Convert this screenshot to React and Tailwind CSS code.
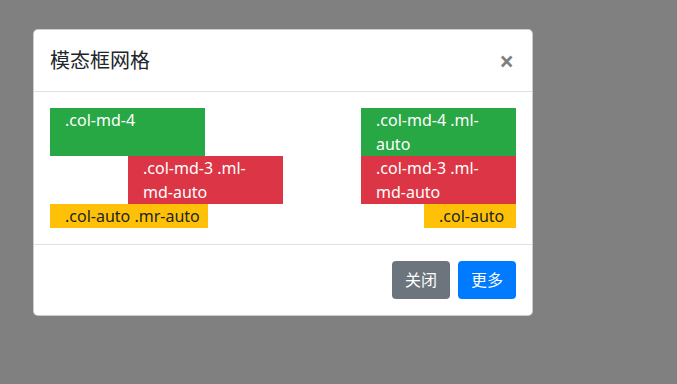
import React from 'react';

function Cell({ color, width, children, className = '' }) {
    return (
        <div className={`${color} ${width} px-[15px] ${className}`}>
            {children}
        </div>
    );
}

export default function App() {
    return (
        <div
            className="w-full h-[384px] bg-[#808080] pt-[29px] pl-[33px] text-[16px] leading-[24px] text-[#212529] font-['Noto_Sans','Noto_Sans_CJK_SC',sans-serif]"
        >
            <div className="w-[500px] bg-white border border-black/20 rounded-[5px]">
                {/* header */}
                <div className="flex items-start justify-between px-4 pt-4 pb-[15px] border-b border-[#dee2e6]">
                    <h5 className="text-[20px] leading-[30px] font-normal">模态框网格</h5>
                    <button className="text-[26px] leading-[30px] font-bold text-black/50 pr-[2px]">×</button>
                </div>

                {/* body */}
                <div className="p-4">
                    <div className="flex justify-between">
                        <Cell color="bg-[#28a745] text-white" width="w-[155px]" className="h-[48px]">.col-md-4</Cell>
                        <Cell color="bg-[#28a745] text-white" width="w-[155px]">.col-md-4 .ml-auto</Cell>
                    </div>
                    <div className="flex">
                        <Cell color="bg-[#dc3545] text-white" width="w-[155px]" className="ml-[78px]">.col-md-3 .ml-md-auto</Cell>
                        <Cell color="bg-[#dc3545] text-white" width="w-[155px]" className="ml-auto">.col-md-3 .ml-md-auto</Cell>
                    </div>
                    <div className="flex justify-between">
                        <Cell color="bg-[#ffc107]" width="w-[158px]" className="whitespace-nowrap">.col-auto .mr-auto</Cell>
                        <Cell color="bg-[#ffc107]" width="w-[92px]" className="whitespace-nowrap">.col-auto</Cell>
                    </div>
                </div>

                {/* footer */}
                <div className="flex justify-end gap-2 px-4 py-4 border-t border-[#dee2e6]">
                    <button className="w-[58px] h-[38px] rounded-[4px] bg-[#6c757d] text-white">关闭</button>
                    <button className="w-[58px] h-[38px] rounded-[4px] bg-[#007bff] text-white">更多</button>
                </div>
            </div>
        </div>
    );
}
